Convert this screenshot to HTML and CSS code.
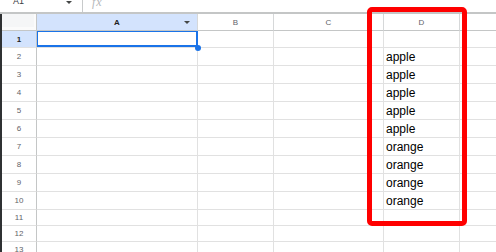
FILE: index.html
```html
<!DOCTYPE html>
<html>
<head>
<meta charset="utf-8">
<link rel="stylesheet" href="styles.css">
</head>
<body>
<div class="app">
  <div class="toolbar">
    <div class="namebox"><span class="ref">A1</span><span class="caret"></span></div>
    <div class="fx">fx</div>
  </div>
  <div class="sheet">
    <div class="grid">
      <div class="corner"></div>
      <div class="colhead active">A<span class="hcaret"></span></div>
      <div class="colhead">B</div>
      <div class="colhead">C</div>
      <div class="colhead">D</div>
      <div class="colhead"></div>

      <div class="rowhead active">1</div>
      <div class="cell selected"><span class="sel"></span><span class="handle"></span></div>
      <div class="cell"></div><div class="cell"></div><div class="cell"></div><div class="cell"></div>

      <div class="rowhead">2</div>
      <div class="cell"></div><div class="cell"></div><div class="cell"></div><div class="cell">apple</div><div class="cell"></div>
      <div class="rowhead">3</div>
      <div class="cell"></div><div class="cell"></div><div class="cell"></div><div class="cell">apple</div><div class="cell"></div>
      <div class="rowhead">4</div>
      <div class="cell"></div><div class="cell"></div><div class="cell"></div><div class="cell">apple</div><div class="cell"></div>
      <div class="rowhead">5</div>
      <div class="cell"></div><div class="cell"></div><div class="cell"></div><div class="cell">apple</div><div class="cell"></div>
      <div class="rowhead">6</div>
      <div class="cell"></div><div class="cell"></div><div class="cell"></div><div class="cell">apple</div><div class="cell"></div>
      <div class="rowhead">7</div>
      <div class="cell"></div><div class="cell"></div><div class="cell"></div><div class="cell">orange</div><div class="cell"></div>
      <div class="rowhead">8</div>
      <div class="cell"></div><div class="cell"></div><div class="cell"></div><div class="cell">orange</div><div class="cell"></div>
      <div class="rowhead">9</div>
      <div class="cell"></div><div class="cell"></div><div class="cell"></div><div class="cell">orange</div><div class="cell"></div>
      <div class="rowhead">10</div>
      <div class="cell"></div><div class="cell"></div><div class="cell"></div><div class="cell">orange</div><div class="cell"></div>
      <div class="rowhead">11</div>
      <div class="cell"></div><div class="cell"></div><div class="cell"></div><div class="cell"></div><div class="cell"></div>
      <div class="rowhead">12</div>
      <div class="cell"></div><div class="cell"></div><div class="cell"></div><div class="cell"></div><div class="cell"></div>
      <div class="rowhead">13</div>
      <div class="cell"></div><div class="cell"></div><div class="cell"></div><div class="cell"></div><div class="cell"></div>
    </div>
  </div>
  <div class="callout"></div>
</div>
</body>
</html>
```
FILE: styles.css
```css
* { box-sizing: border-box; }
html, body { margin: 0; padding: 0; }
body {
  width: 496px;
  height: 252px;
  overflow: hidden;
  background: #fff;
  font-family: "Liberation Sans", Arial, sans-serif;
}
.app {
  position: relative;
  width: 496px;
  height: 252px;
  overflow: hidden;
}
.toolbar {
  display: flex;
  height: 14px;
  border-bottom: 2px solid #c4c6c6;
  overflow: hidden;
}
.namebox {
  display: flex;
  align-items: flex-start;
  width: 83px;
  border-right: 1px solid #c8cacb;
  padding-left: 13px;
  padding-right: 10px;
}
.ref {
  font-size: 9px;
  line-height: 9px;
  margin-top: -3px;
  color: #3c4043;
}
.caret {
  margin-left: auto;
  margin-top: 1px;
  width: 0;
  height: 0;
  border-left: 3px solid transparent;
  border-right: 3px solid transparent;
  border-top: 3px solid #444746;
}
.fx {
  margin-left: 9px;
  font-family: "Liberation Serif", serif;
  font-style: italic;
  font-size: 12px;
  line-height: 12px;
  margin-top: -4px;
  color: #b4b7ba;
  letter-spacing: 1px;
}
.sheet {
  border-left: 2px solid #2f3133;
  height: 238px;
}
.grid {
  display: grid;
  grid-template-columns: 35px 161px 76px 110px 76px 40px;
  grid-template-rows: 17px 17px repeat(9, 18px) 16px 16px 16px;
}
.corner {
  background: #f5f6f7;
  border-right: 1px solid #c4c6c6;
  border-bottom: 1px solid #c4c6c6;
  box-shadow: inset -2px -3px 0 #fbfbfb;
}
.colhead {
  position: relative;
  display: flex;
  align-items: center;
  justify-content: center;
  font-size: 8px;
  color: #5f6368;
  background: #fff;
  border-right: 1px solid #d6d8d9;
  border-bottom: 1px solid #c4c6c6;
}
.colhead.active {
  background: #d3e3fd;
  color: #1f1f1f;
  font-weight: bold;
}
.hcaret {
  position: absolute;
  right: 7px;
  top: 7px;
  width: 0;
  height: 0;
  border-left: 3px solid transparent;
  border-right: 3px solid transparent;
  border-top: 3px solid #444746;
}
.rowhead {
  display: flex;
  align-items: center;
  justify-content: center;
  font-size: 8px;
  color: #5f6368;
  background: #fff;
  border-right: 1px solid #c4c6c6;
  border-bottom: 1px solid #e1e1e1;
}
.rowhead.active {
  background: #d3e3fd;
  color: #1f1f1f;
  font-weight: bold;
}
.cell {
  position: relative;
  border-right: 1px solid #e1e1e1;
  border-bottom: 1px solid #e1e1e1;
  font-size: 12px;
  line-height: 14px;
  padding: 2px 2px 0;
  color: #000;
  white-space: nowrap;
}
.sel {
  position: absolute;
  left: 0;
  top: 0;
  width: 161px;
  height: 16px;
  border: 2px solid #1a73e8;
  border-top-width: 1px;
  border-left-width: 1px;
}
.handle {
  position: absolute;
  left: 158px;
  top: 14px;
  width: 6px;
  height: 6px;
  border-radius: 50%;
  background: #1a73e8;
  z-index: 2;
}
.callout {
  position: absolute;
  left: 367px;
  top: 7px;
  width: 100px;
  height: 219px;
  border: 5px solid #ff0000;
  border-radius: 5px;
}
```
